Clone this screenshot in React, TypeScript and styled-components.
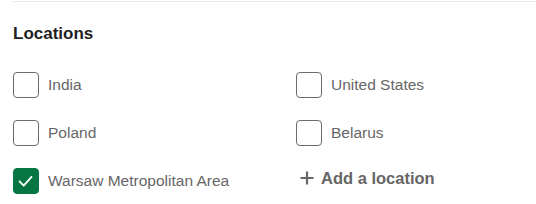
import styled, { createGlobalStyle } from "styled-components";

const GlobalStyle = createGlobalStyle`
  body {
    margin: 0;
    background: #ffffff;
    font-family: "Liberation Sans", Arial, sans-serif;
  }
`;

const Section = styled.section`
  padding: 1px 0 0 13px;
`;

const Divider = styled.div`
  height: 1px;
  background: #e8e8e8;
`;

const Heading = styled.h3`
  margin: 20px 0 15px;
  font-size: 17px;
  line-height: 24px;
  font-weight: 700;
  color: #1f1f1f;
`;

const Grid = styled.div`
  display: grid;
  grid-template-columns: 283px 1fr;
  grid-auto-rows: 48px;
  align-items: center;
`;

const Option = styled.label`
  display: flex;
  align-items: center;
  gap: 9px;
  cursor: pointer;
`;

const Box = styled.span<{ $checked?: boolean }>`
  box-sizing: border-box;
  width: 26px;
  height: 26px;
  border-radius: 4px;
  border: 1px solid ${(p) => (p.$checked ? "#057642" : "#6b6b6b")};
  background: ${(p) => (p.$checked ? "#057642" : "#ffffff")};
  display: flex;
  align-items: center;
  justify-content: center;
  flex-shrink: 0;
`;

const Label = styled.span`
  font-size: 15.5px;
  line-height: 20px;
  color: #666666;
`;

const AddButton = styled.button`
  display: flex;
  align-items: center;
  gap: 6px;
  padding: 0 0 0 3px;
  margin-top: -6px;
  border: none;
  background: none;
  font-family: "Liberation Sans", Arial, sans-serif;
  font-size: 16.5px;
  font-weight: 700;
  color: #666666;
  cursor: pointer;
  justify-self: start;
`;

const Check = () => (
  <svg width="26" height="26" viewBox="0 0 26 26" fill="none">
    <path
      d="M6 13.5 L10.5 18 L19 8.5"
      stroke="#ffffff"
      strokeWidth="2"
      strokeLinecap="round"
      strokeLinejoin="round"
    />
  </svg>
);

const Plus = () => (
  <svg width="16" height="16" viewBox="0 0 16 16" fill="none">
    <path d="M8 1.5 V14.5 M1.5 8 H14.5" stroke="#666666" strokeWidth="2.2" />
  </svg>
);

const options = [
  { name: "India", checked: false },
  { name: "United States", checked: false },
  { name: "Poland", checked: false },
  { name: "Belarus", checked: false },
  { name: "Warsaw Metropolitan Area", checked: true },
];

const App = () => {
  return (
    <>
      <GlobalStyle />
      <Section>
        <Divider />
        <Heading>Locations</Heading>
        <Grid>
          {options.map((o) => (
            <Option key={o.name}>
              <Box $checked={o.checked}>{o.checked && <Check />}</Box>
              <Label>{o.name}</Label>
            </Option>
          ))}
          <AddButton>
            <Plus />
            Add a location
          </AddButton>
        </Grid>
      </Section>
    </>
  );
};

export default App;
